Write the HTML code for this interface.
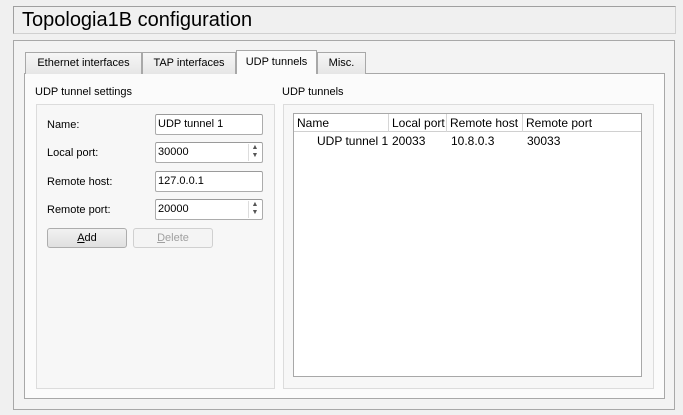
<!DOCTYPE html>
<html><head><style>
*{box-sizing:border-box;margin:0;padding:0}
body{width:683px;height:415px;background:#f0f0f0;font-family:"Liberation Sans",sans-serif;font-size:11px;color:#000;position:relative;overflow:hidden}
.a{position:absolute}
.title{left:13px;top:6px;width:663px;height:28px;border:1px solid #a0a0a0;border-right-color:#d0d0d0;border-bottom-color:#d0d0d0;background:#f0f0f0;font-size:20px;padding:1px 0 0 8px;line-height:24px}
.outer{left:13px;top:40px;width:662px;height:370px;border:1px solid #a8a8a8;background:#f3f3f3}
.pane{left:24px;top:73px;width:641px;height:326px;border:1px solid #a8a8a8;background:#fbfbfb}
.tab{top:52px;height:22px;border:1px solid #a8a8a8;border-bottom:none;background:linear-gradient(#f6f6f6,#e6e6e6);text-align:center;line-height:21px}
.tab.act{top:50px;height:24px;background:#fbfbfb;line-height:22px}
.grp{border:1px solid #dcdcdc;background:#f7f7f7}
.inp{height:21px;border:1px solid #acacac;border-top-color:#9a9a9a;background:#fff;padding-left:2px;line-height:19px;border-radius:2px}
.spin{position:absolute;right:1px;top:1px;width:13px;height:17px;border-left:1px solid #ddd;font-size:7px;line-height:8px;color:#555;text-align:center}
.btn{height:20px;border:1px solid #adadad;border-radius:3px;background:linear-gradient(#f2f2f2,#e0e0e0);text-align:center;line-height:18px}
.th{top:114px;height:18px;border-right:1px solid #d6d6d6;padding-left:3px;line-height:18px;font-size:12px}
.td{top:133px;line-height:16px;font-size:12px}
</style></head><body>
<div class="a title">Topologia1B configuration</div>
<div class="a outer"></div>
<div class="a pane"></div>
<div class="a tab" style="left:25px;width:117px">Ethernet interfaces</div>
<div class="a tab" style="left:142px;width:94px">TAP interfaces</div>
<div class="a tab" style="left:317px;width:49px">Misc.</div>
<div class="a tab act" style="left:236px;width:81px">UDP tunnels</div>
<div class="a" style="left:35px;top:86px">UDP tunnel settings</div>
<div class="a" style="left:282px;top:86px">UDP tunnels</div>
<div class="a grp" style="left:36px;top:104px;width:239px;height:285px"></div>
<div class="a grp" style="left:283px;top:104px;width:371px;height:285px"></div>
<div class="a" style="left:47px;top:119px">Name:</div>
<div class="a" style="left:47px;top:147px">Local port:</div>
<div class="a" style="left:47px;top:176px">Remote host:</div>
<div class="a" style="left:47px;top:204px">Remote port:</div>
<div class="a inp" style="left:155px;top:114px;width:108px">UDP tunnel 1</div>
<div class="a inp" style="left:155px;top:142px;width:108px">30000<div class="spin">▲<br>▼</div></div>
<div class="a inp" style="left:155px;top:171px;width:108px">127.0.0.1</div>
<div class="a inp" style="left:155px;top:199px;width:108px">20000<div class="spin">▲<br>▼</div></div>
<div class="a btn" style="left:47px;top:228px;width:80px"><u>A</u>dd</div>
<div class="a btn" style="left:133px;top:228px;width:80px;color:#a0a0a0;border-color:#d0d0d0;background:#f4f4f4"><u>D</u>elete</div>
<div class="a" style="left:293px;top:113px;width:349px;height:264px;border:1px solid #a8a8a8;background:#fff"></div>
<div class="a" style="left:294px;top:114px;width:347px;height:18px;border-bottom:1px solid #d0d0d0;background:#fff"></div>
<div class="a th" style="left:294px;width:95px">Name</div>
<div class="a th" style="left:389px;width:58px">Local port</div>
<div class="a th" style="left:447px;width:76px">Remote host</div>
<div class="a th" style="left:523px;width:117px;border-right:none">Remote port</div>
<div class="a td" style="left:317px">UDP tunnel 1</div>
<div class="a td" style="left:392px">20033</div>
<div class="a td" style="left:451px">10.8.0.3</div>
<div class="a td" style="left:527px">30033</div>
</body></html>
